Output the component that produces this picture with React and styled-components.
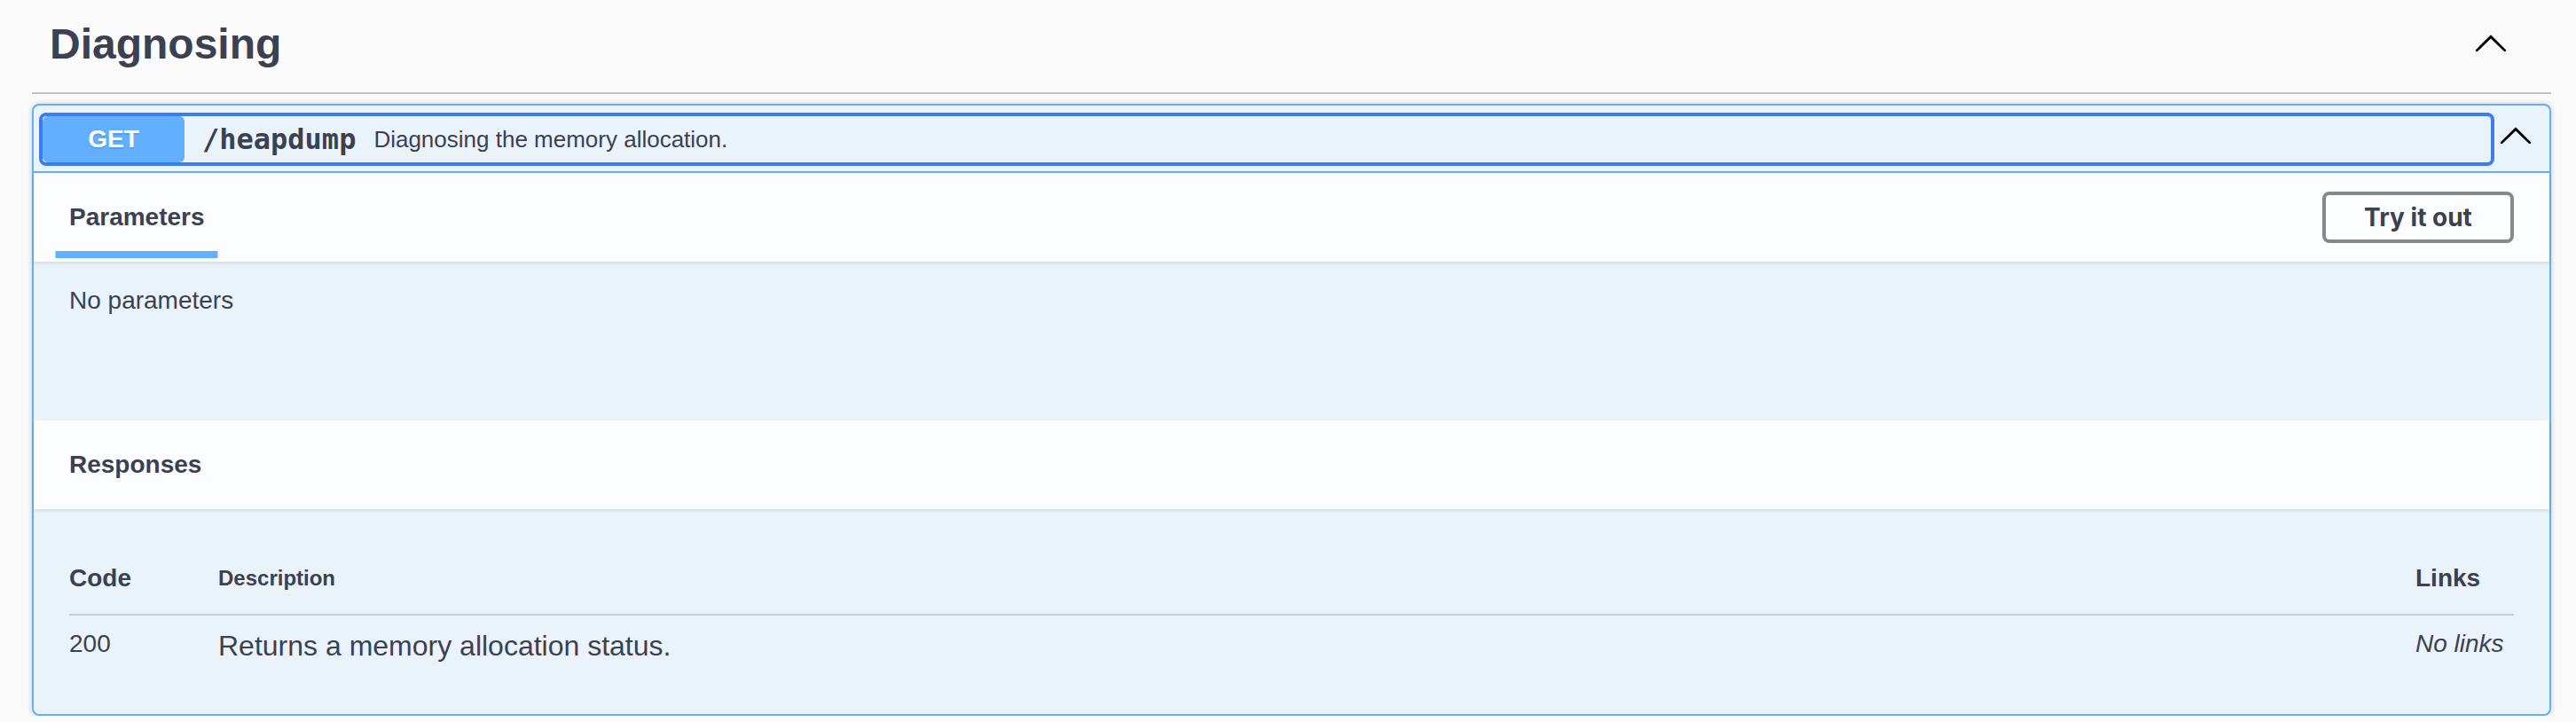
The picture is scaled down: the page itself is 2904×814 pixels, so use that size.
import styled, { createGlobalStyle } from "styled-components";

const GlobalStyle = createGlobalStyle`
  html, body {
    margin: 0;
    padding: 0;
    background: #fafafa;
  }
  body {
    font-family: "Liberation Sans", Arial, sans-serif;
    color: #3b4151;
  }
  * {
    box-sizing: border-box;
  }
`;

const Page = styled.div`
  padding: 0 28px 0 36px;
`;

const TagHeader = styled.div`
  display: flex;
  align-items: center;
  justify-content: space-between;
  padding: 20px 48px 24px 20px;
  border-bottom: 2px solid rgba(59, 65, 81, 0.3);
  margin-bottom: 11px;
`;

const TagTitle = styled.h4`
  margin: 0;
  font-size: 48px;
  line-height: 60px;
  font-weight: 700;
  color: #3b4151;
`;

const ArrowButton = styled.button`
  display: flex;
  width: 40px;
  height: 40px;
  padding: 0;
  margin: ${({ $inSummary }) => ($inSummary ? "0 8px 10px" : "0 0 4px")};
  border: none;
  background: none;
  cursor: pointer;
`;

const Opblock = styled.div`
  border: 2px solid #61affe;
  border-radius: 8px;
  background: rgba(97, 175, 254, 0.1);
  box-shadow: 0 0 6px rgba(0, 0, 0, 0.19);
`;

const Summary = styled.div`
  display: flex;
  align-items: center;
  padding: 12px 10px 10px;
  border-bottom: 2px solid #61affe;
`;

const SummaryControl = styled.div`
  flex: 1;
  display: flex;
  align-items: center;
  min-height: 52px;
  outline: 4px solid #3b7cf0;
  border-radius: 4px;
`;

const Method = styled.span`
  min-width: 160px;
  padding: 12px 0;
  line-height: 28px;
  font-size: 28px;
  font-weight: 700;
  text-align: center;
  color: #fff;
  background: #61affe;
  border-radius: 6px;
  text-shadow: 0 2px 0 rgba(0, 0, 0, 0.1);
`;

const Path = styled.span`
  padding: 0 20px;
  font-family: "DejaVu Sans Mono", monospace;
  font-weight: 700;
  font-size: 32px;
  color: #3b4151;
`;

const Description = styled.span`
  font-size: 26px;
  color: #3b4151;
`;

const SectionHeader = styled.div`
  display: flex;
  align-items: center;
  justify-content: space-between;
  min-height: 100px;
  padding: 16px 40px;
  background: rgba(255, 255, 255, 0.8);
  box-shadow: 0 2px 4px rgba(0, 0, 0, 0.1);
`;

const SectionTitle = styled.h4`
  position: relative;
  margin: 0;
  font-size: 28px;
  line-height: 32px;
  font-weight: 700;
  color: #3b4151;

  ${({ $active }) =>
    $active &&
    `
    &::after {
      content: "";
      position: absolute;
      left: 50%;
      bottom: -30px;
      width: 120%;
      height: 8px;
      background: #61affe;
      transform: translateX(-50%);
    }
  `}
`;

const TryButton = styled.button`
  width: 216px;
  height: 58px;
  padding: 0;
  border: 4px solid #888;
  border-radius: 8px;
  background: transparent;
  font-family: Inter, "Liberation Sans", sans-serif;
  font-size: 28px;
  font-weight: 700;
  color: #3b4151;
  cursor: pointer;
`;

const ParamsBody = styled.div`
  height: 179px;
  padding: 28px 40px;
  font-size: 28px;
  line-height: 32px;
`;

const ResponsesInner = styled.div`
  padding: 40px 40px 58px;
`;

const Table = styled.div`
  display: grid;
  grid-template-columns: 168px 1fr 111px;
`;

const HeadCell = styled.div`
  padding: 22px 0 24px;
  font-size: ${({ $size }) => $size}px;
  line-height: 32px;
  font-weight: 700;
  border-bottom: 2px solid rgba(59, 65, 81, 0.2);
`;

const Cell = styled.div`
  padding-top: 16px;
  font-size: ${({ $size }) => $size}px;
  line-height: ${({ $size }) => ($size > 30 ? 37 : 32)}px;
  font-style: ${({ $italic }) => ($italic ? "italic" : "normal")};
`;

const ArrowUp = () => (
  <svg width="40" height="40" viewBox="0 0 20 20" aria-hidden="true">
    <path
      fill="#000"
      d="M17.418 14.908c.272.268.709.268.979 0s.271-.701 0-.969l-7.908-7.83c-.27-.268-.707-.268-.979 0l-7.908 7.83c-.27.268-.27.701 0 .969.271.268.709.268.979 0L10 7.767l7.418 7.141z"
    />
  </svg>
);

const App = () => {
  return (
    <Page>
      <GlobalStyle />
      <TagHeader>
        <TagTitle>Diagnosing</TagTitle>
        <ArrowButton type="button">
          <ArrowUp />
        </ArrowButton>
      </TagHeader>

      <Opblock>
        <Summary>
          <SummaryControl>
            <Method>GET</Method>
            <Path>/heapdump</Path>
            <Description>Diagnosing the memory allocation.</Description>
          </SummaryControl>
          <ArrowButton type="button" $inSummary>
            <ArrowUp />
          </ArrowButton>
        </Summary>

        <SectionHeader>
          <SectionTitle $active>Parameters</SectionTitle>
          <TryButton type="button">Try it out</TryButton>
        </SectionHeader>
        <ParamsBody>No parameters</ParamsBody>

        <SectionHeader>
          <SectionTitle>Responses</SectionTitle>
        </SectionHeader>
        <ResponsesInner>
          <Table>
            <HeadCell $size={28}>Code</HeadCell>
            <HeadCell $size={24}>Description</HeadCell>
            <HeadCell $size={28}>Links</HeadCell>
            <Cell $size={28}>200</Cell>
            <Cell $size={32}>Returns a memory allocation status.</Cell>
            <Cell $size={28} $italic>
              No links
            </Cell>
          </Table>
        </ResponsesInner>
      </Opblock>
    </Page>
  );
};

export default App;
